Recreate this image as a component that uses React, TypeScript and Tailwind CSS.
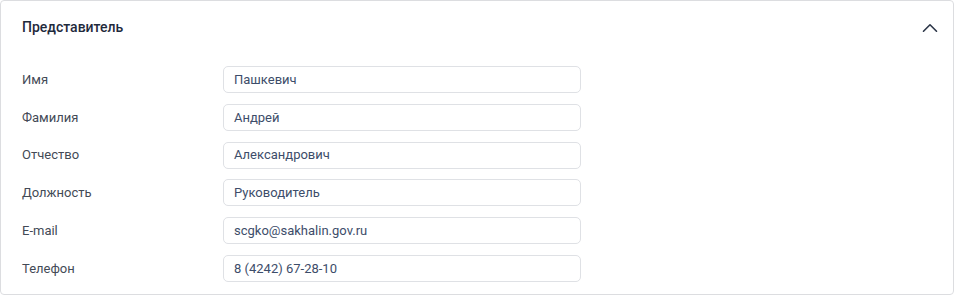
import { ChevronUp } from 'lucide-react';

const fields = [
    { label: 'Имя', value: 'Пашкевич' },
    { label: 'Фамилия', value: 'Андрей' },
    { label: 'Отчество', value: 'Александрович' },
    { label: 'Должность', value: 'Руководитель' },
    { label: 'E-mail', value: 'scgko@sakhalin.gov.ru' },
    { label: 'Телефон', value: '8 (4242) 67-28-10' },
];

export default function App() {
    return (
        <div className="w-[954px] h-[295px] bg-white font-['Roboto',sans-serif]">
            <div className="h-[295px] border border-[#dcdde0] rounded-[4px] bg-white">
                <div className="h-[52px] flex items-center justify-between pl-[21px] pr-[10px]">
                    <h3 className="text-[14px] font-medium text-[#1f2a3c]">Представитель</h3>
                    <ChevronUp className="w-[26px] h-[26px] text-[#2d3748] mt-[2px]" strokeWidth={1.5} />
                </div>
                <div className="flex flex-col gap-[10.8px] pt-[13px] pl-[21px]">
                    {fields.map((f) => (
                        <div key={f.label} className="flex items-center h-[27px]">
                            <div className="w-[201px] text-[13px] text-[#434a56]">{f.label}</div>
                            <div className="w-[358px] h-[27px] flex items-center px-[10px] border border-[#dfe1e5] rounded-[5px] text-[13px] text-[#3d4d6a]">
                                {f.value}
                            </div>
                        </div>
                    ))}
                </div>
            </div>
        </div>
    );
}
